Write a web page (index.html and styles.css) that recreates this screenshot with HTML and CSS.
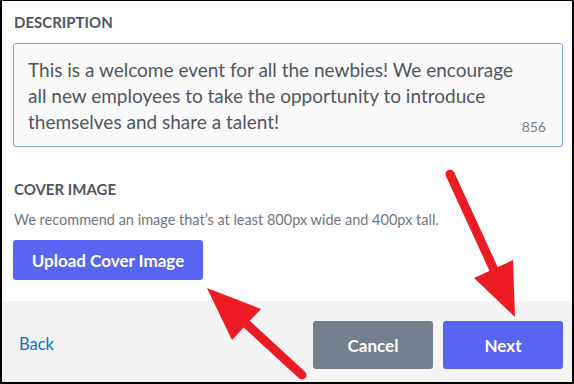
FILE: index.html
```html
<!DOCTYPE html>
<html lang="en">
<head>
  <meta charset="UTF-8" />
  <title>Create Event</title>
  <link rel="stylesheet" href="styles.css">
</head>
<body>
  <div class="frame">
    <div class="content">
      <div class="label">Description</div>
      <div class="textarea">
        <p>This is a welcome event for all the newbies! We encourage all new employees to take the opportunity to introduce themselves and share a talent!</p>
        <span class="counter">856</span>
      </div>

      <div class="label cover-label">Cover Image</div>
      <p class="hint">We recommend an image that’s at least 800px wide and 400px tall.</p>
      <button class="btn btn-upload">Upload Cover Image</button>
    </div>

    <div class="footer">
      <a class="back" href="#">Back</a>
      <div class="actions">
        <button class="btn btn-cancel">Cancel</button>
        <button class="btn btn-next">Next</button>
      </div>
    </div>

    <!-- annotation arrows drawn over the screenshot -->
    <svg class="arrows" width="574" height="384" viewBox="0 0 574 384">
      <g stroke="#ed1c24" stroke-width="9" stroke-linecap="round" fill="none">
        <line x1="302" y1="375" x2="240" y2="318" />
        <line x1="450" y1="174" x2="495" y2="272" />
      </g>
      <g fill="#ed1c24">
        <polygon points="207,288 261,309 232,340" />
        <polygon points="515,317 513,260 474,278" />
      </g>
    </svg>
  </div>
</body>
</html>
```

FILE: styles.css
```css
body {
  margin: 0;
  font-family: Lato, "Open Sans", sans-serif;
}

.frame {
  position: relative;
  width: 574px;
  height: 384px;
  box-sizing: border-box;
  border: 2px solid #000;
  border-top-width: 1px;
  background: #fff;
  display: flex;
  flex-direction: column;
  overflow: hidden;
}

.content {
  flex: 1;
  padding: 12px 9px 0 11px;
}

.label {
  font-size: 15px;
  line-height: 18px;
  font-weight: 700;
  text-transform: uppercase;
  color: #4f5660;
  margin-left: 1px;
}

.textarea {
  position: relative;
  margin-top: 12px;
  height: 104px;
  box-sizing: border-box;
  border: 1px solid #7aa9ea;
  border-radius: 3px;
  background: #fafafa;
  padding: 13px 40px 11px 14px;
}

.textarea p {
  margin: 0;
  font-size: 19px;
  line-height: 26px;
  color: #4f5660;
}

.counter {
  position: absolute;
  right: 16px;
  bottom: 11px;
  font-size: 14px;
  color: #747f8d;
}

.cover-label {
  margin-top: 33px;
}

.hint {
  margin: 13px 0 0 1px;
  font-size: 14.5px;
  line-height: 18px;
  color: #72767d;
}

.btn {
  border: none;
  border-radius: 3px;
  font-family: inherit;
  font-weight: 700;
  font-size: 17px;
  color: #fff;
  cursor: pointer;
}

.btn-upload {
  display: block;
  margin-top: 11px;
  width: 190px;
  height: 40px;
  background: #5865f2;
}

.footer {
  height: 81px;
  box-sizing: border-box;
  background: #f4f4f5;
  display: flex;
  align-items: flex-start;
  justify-content: space-between;
  padding: 20px 9px 0 17px;
}

.back {
  margin-top: 12px;
  font-size: 16.5px;
  line-height: 22px;
  color: #0b6fd6;
  text-decoration: none;
}

.actions {
  display: flex;
  gap: 10px;
}

.btn-cancel,
.btn-next {
  width: 120px;
  height: 48px;
}

.btn-cancel {
  background: #747f8d;
}

.btn-next {
  background: #5865f2;
}

.arrows {
  position: absolute;
  left: -2px;
  top: -1px;
  pointer-events: none;
}
```
